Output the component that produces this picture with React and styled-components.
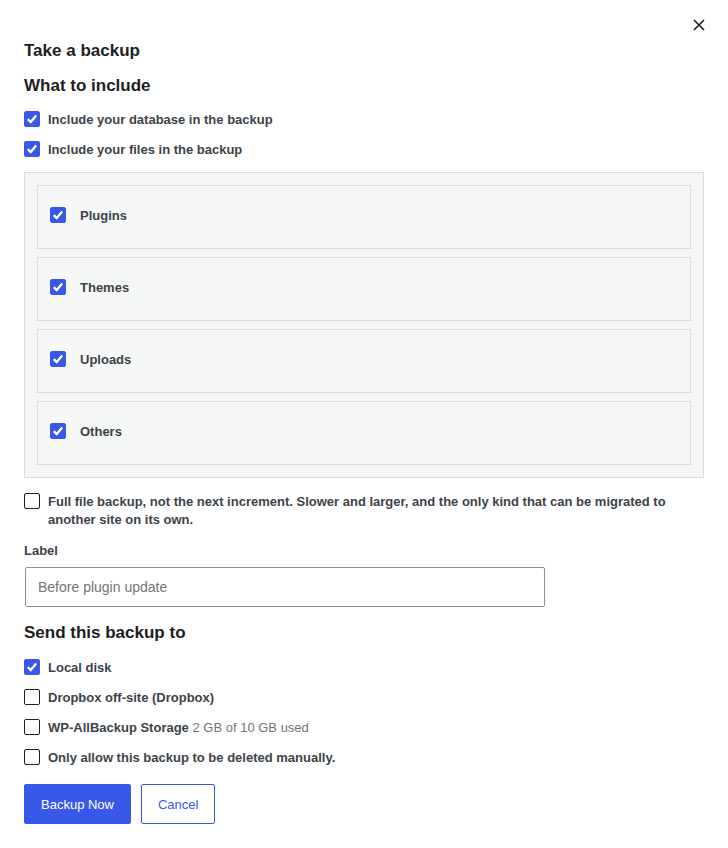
import styled, { createGlobalStyle } from "styled-components";

const Global = createGlobalStyle`
  html, body { margin: 0; padding: 0; background: #fff; }
  body { font-family: "Liberation Sans", Arial, sans-serif; color: #1e1e1e; }
  * { box-sizing: border-box; }
`;

const Modal = styled.div`
  position: relative;
  width: 728px;
  padding: 40px 24px 24px 24px;
`;

const Close = styled.button`
  position: absolute;
  top: 16px;
  right: 20px;
  width: 18px;
  height: 18px;
  padding: 0;
  border: 0;
  background: none;
  display: flex;
  align-items: center;
  justify-content: center;
`;

const Title = styled.h2`
  margin: 0 0 ${(p) => p.$gap || 13}px 0;
  font-size: 17px;
  line-height: 22px;
  font-weight: 700;
  color: #1e1e1e;
`;

const Row = styled.label`
  display: flex;
  align-items: flex-start;
  gap: 8px;
  font-size: 13px;
  line-height: 18px;
  font-weight: 700;
  color: #3c434a;
  margin-bottom: ${(p) => (p.$mb != null ? p.$mb : 12)}px;
`;

const Box = styled.span`
  flex: none;
  width: 16px;
  height: 16px;
  border-radius: 2px;
  display: flex;
  align-items: center;
  justify-content: center;
  background: ${(p) => (p.$on ? "#3858e9" : "#fff")};
  border: 1px solid ${(p) => (p.$on ? "#3858e9" : "#1e1e1e")};
`;

const Muted = styled.span`
  font-weight: 400;
  color: #757575;
`;

const Panel = styled.div`
  background: #f6f7f7;
  border: 1px solid #dcdcde;
  padding: 12px;
  display: flex;
  flex-direction: column;
  gap: 8px;
  margin-bottom: 15px;
`;

const Card = styled.div`
  height: 64px;
  border: 1px solid #dcdcde;
  padding: 0 12px 4px;
  display: flex;
  align-items: center;
  gap: 14px;
  font-size: 13px;
  font-weight: 700;
  color: #3c434a;
`;

const FieldLabel = styled.div`
  font-size: 13px;
  font-weight: 700;
  color: #3c434a;
  line-height: 18px;
  margin: 13px 0 7px;
`;

const Input = styled.input`
  display: block;
  width: 520px;
  height: 40px;
  margin: 0 0 15px 1px;
  padding: 0 12px;
  border: 1px solid #8c8f94;
  border-radius: 2px;
  font-family: "Liberation Sans", Arial, sans-serif;
  font-size: 14px;
  color: #1e1e1e;
  &::placeholder { color: #757575; }
`;

const Actions = styled.div`
  display: flex;
  gap: 10px;
  margin-top: 17px;
`;

const Button = styled.button`
  height: 40px;
  padding: 0 16px;
  border-radius: 2px;
  font-family: "Liberation Sans", Arial, sans-serif;
  font-size: 13px;
  border: 1px solid #3858e9;
  background: ${(p) => (p.$primary ? "#3858e9" : "#fff")};
  color: ${(p) => (p.$primary ? "#fff" : "#3858e9")};
`;

function Check({ on }) {
  return (
    <Box $on={on}>
      {on && (
        <svg width="12" height="12" viewBox="0 0 12 12">
          <path d="M1.8 6.2 L4.7 9 L10.2 2.6" fill="none" stroke="#fff" strokeWidth="2.3" />
        </svg>
      )}
    </Box>
  );
}

export default function App() {
  return (
    <>
      <Global />
      <Modal>
        <Close aria-label="Close">
          <svg width="12" height="12" viewBox="0 0 12 12">
            <path d="M1 1 L11 11 M11 1 L1 11" stroke="#1e1e1e" strokeWidth="1.6" />
          </svg>
        </Close>
        <Title>Take a backup</Title>
        <Title $gap={14}>What to include</Title>
        <Row><Check on /><span>Include your database in the backup</span></Row>
        <Row $mb={13}><Check on /><span>Include your files in the backup</span></Row>
        <Panel>
          {["Plugins", "Themes", "Uploads", "Others"].map((n) => (
            <Card key={n}><Check on /><span>{n}</span></Card>
          ))}
        </Panel>
        <Row $mb={0}>
          <Check />
          <span>
            Full file backup, not the next increment. Slower and larger, and the only kind that can be migrated to another site on its own.
          </span>
        </Row>
        <FieldLabel>Label</FieldLabel>
        <Input placeholder="Before plugin update" />
        <Title $gap={15}>Send this backup to</Title>
        <Row><Check on /><span>Local disk</span></Row>
        <Row><Check /><span>Dropbox off-site (Dropbox)</span></Row>
        <Row><Check /><span>WP-AllBackup Storage <Muted>2 GB of 10 GB used</Muted></span></Row>
        <Row $mb={0}><Check /><span>Only allow this backup to be deleted manually.</span></Row>
        <Actions>
          <Button $primary>Backup Now</Button>
          <Button>Cancel</Button>
        </Actions>
      </Modal>
    </>
  );
}
